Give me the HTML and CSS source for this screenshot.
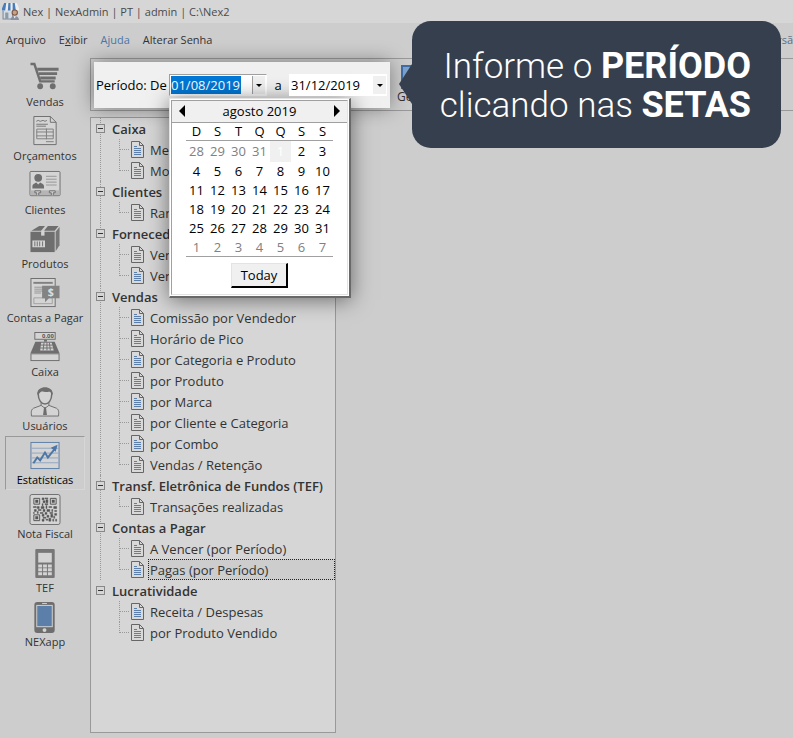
FILE: index.html
```html
<!DOCTYPE html>
<html lang="pt-BR">
<head>
    <meta charset="UTF-8">
    <meta name="viewport" content="width=device-width, initial-scale=1.0">
    <title>Nex | NexAdmin</title>
    <link rel="stylesheet" href="styles.css">
</head>

<body>
    <!-- shared icons -->
    <svg class="defs" width="0" height="0">
        <symbol id="doc" viewBox="0 0 13 17">
            <path d="M.5.5h8l4 4v12H.5z" fill="#d9d9d9" stroke="#666"/>
            <path d="M8.500.5v4h4" fill="none" stroke="#666"/>
            <path d="M3 5.500h3M3 7.500h7M3 9.500h7M3 11.500h7M3 13.500h7" stroke="#5b7fa8"/>
        </symbol>
    </svg>

    <header class="titlebar">
        <svg width="17" height="17" viewBox="0 0 16 16">
            <path d="M1 7v8h9V7" fill="#d5dbe2" stroke="#7d8b99"/>
            <path d="M3 9h3v6H3z" fill="#8d9aa8"/>
            <path d="M2 0h12l2 5v2H0V5z" fill="#eee"/>
            <path d="M2 0h2L3 7H0V5zM6 0h2v7H5.500zM10 0h2l1 7h-3z" fill="#4a7db8"/>
            <circle cx="12" cy="9" r="2.500" fill="#c9a184" stroke="#7b5a48"/>
            <path d="M8 16c0-5 8-5 8 0z" fill="#8791a0"/>
            <path d="M11 12.500l1 2 1-2z" fill="#fff"/>
        </svg>
        <span>Nex | NexAdmin | PT | admin | C:\Nex2</span>
    </header>

    <nav class="menubar">
        <a href="#">Arquivo</a>
        <a href="#">E<u>x</u>ibir</a>
        <a href="#" class="help">Ajuda</a>
        <a href="#">Alterar Senha</a>
        <span class="version">Versã</span>
    </nav>

    <div class="window">
        <nav class="sidebar">
            <a href="#" class="item">
                <svg width="32" height="32" viewBox="0 0 32 32">
                    <path d="M1 2h4l6 18h15" fill="none" stroke="#6e6e6e" stroke-width="2.500"/>
                    <path d="M8 7.500h22M9.500 12h19M11 16.500h16" stroke="#6e6e6e" stroke-width="3"/>
                    <circle cx="11" cy="25" r="3" fill="#6e6e6e"/>
                    <circle cx="24" cy="25" r="3" fill="#6e6e6e"/>
                </svg>
                <span>Vendas</span>
            </a>
            <a href="#" class="item">
                <svg width="32" height="32" viewBox="0 0 32 32">
                    <path d="M4.500.5h17l6 6v23h-23z" fill="#d4d4d4" stroke="#6e6e6e"/>
                    <path d="M21.500.5v6h6" fill="none" stroke="#6e6e6e"/>
                    <path d="M7 5.500l2-1 2 1 3-1 2 1 2-1M7 8.500h12M7 10.500h10" fill="none" stroke="#777"/>
                    <path d="M7.500 13.500h17v10h-17zM7 16.500h18M7 20.500h18M17.500 13v11M17 26.500h8" fill="none" stroke="#808080"/>
                </svg>
                <span>Orçamentos</span>
            </a>
            <a href="#" class="item">
                <svg width="32" height="32" viewBox="0 0 32 32">
                    <rect x=".5" y="1.500" width="31" height="25" rx="1" fill="#d4d4d4" stroke="#6e6e6e"/>
                    <path d="M1 21h30v5H1z" fill="#b5b5b5"/>
                    <circle cx="9" cy="8" r="4" fill="#6e6e6e"/>
                    <path d="M3 19v-2c0-3 3-3 4-4l2 2 2-2c1 1 4 1 4 4v2z" fill="#6e6e6e"/>
                    <path d="M17 6.500h11M17 9.500h11M17 12.500h11M17 15.500h11" stroke="#969696"/>
                    <path d="M7.500 26v-2.500h-2v-2h6v2h-2V26M22.500 26v-2.500h-2v-2h6v2h-2V26" fill="#d4d4d4" stroke="#6e6e6e"/>
                </svg>
                <span>Clientes</span>
            </a>
            <a href="#" class="item">
                <svg width="32" height="32" viewBox="0 0 32 32">
                    <path d="M1 8h25v21H1z" fill="#6e6e6e"/>
                    <path d="M2 7l8-5h6l-4 5zM15 7l4-5h11l-4 5z" fill="#6e6e6e"/>
                    <path d="M27 8l4-5v19l-4 6z" fill="#777"/>
                    <path d="M12 7h3.500v5H12z" fill="#d4d4d4"/>
                    <path d="M3 17h13v7H3z" fill="#d4d4d4"/>
                    <path d="M5.500 18v5M8 18v5M10.500 18v5M13.500 18v5" stroke="#6e6e6e"/>
                </svg>
                <span>Produtos</span>
            </a>
            <a href="#" class="item">
                <svg width="32" height="32" viewBox="0 0 32 32">
                    <rect x="1.500" y=".5" width="25" height="29" fill="#d4d4d4" stroke="#6e6e6e"/>
                    <path d="M4 5h20" stroke="#808080" stroke-width="2"/>
                    <path d="M5 9.500h9M5 11.500h9M5 13.500h9M5 15.500h7" stroke="#969696"/>
                    <path d="M4.500 20.500h19v6h-19z" fill="none" stroke="#a0a0a0"/>
                    <path d="M13 8h18v13H20l-4 4v-4h-3z" fill="#838383"/>
                    <text x="22" y="19" class="coin">$</text>
                </svg>
                <span>Contas a Pagar</span>
            </a>
            <a href="#" class="item">
                <svg width="32" height="32" viewBox="0 0 32 32">
                    <rect x="5.500" y=".5" width="21" height="7" fill="#d4d4d4" stroke="#6e6e6e"/>
                    <text x="19" y="6" class="digits">0.00</text>
                    <path d="M15 8h3v2h-3z" fill="#6e6e6e"/>
                    <path d="M6 10h20l5 12H1z" fill="#6e6e6e"/>
                    <path d="M12 11h11l2 8H11z" fill="#d4d4d4"/>
                    <path d="M15 11l-1 8M18 11v8M20.500 11l1 8M11 13.500h13M11 16.500h13" stroke="#6e6e6e"/>
                    <rect x="1.500" y="22.500" width="29" height="7" fill="#d4d4d4" stroke="#6e6e6e"/>
                </svg>
                <span>Caixa</span>
            </a>
            <a href="#" class="item">
                <svg width="32" height="32" viewBox="0 0 32 32">
                    <path d="M12 16v4L4 23c-3 2-2 5-2 8h28c0-3 1-6-2-8l-8-3v-4" fill="#d4d4d4" stroke="#6e6e6e"/>
                    <path d="M9 8c0-7 14-7 14 0 0 14-14 14-14 0z" fill="#d4d4d4" stroke="#6e6e6e" stroke-width="1.500"/>
                    <path d="M8 8c0-9 16-9 16 0l-1 2c0-4-2-4-3-4-4 1-7-1-8 0s-2 1-3 4z" fill="#6e6e6e"/>
                    <path d="M12 20l4 3 4-3" fill="none" stroke="#6e6e6e"/>
                    <path d="M15 22h2l1 8h-4z" fill="#6e6e6e"/>
                </svg>
                <span>Usuários</span>
            </a>
            <a href="#" class="item active">
                <svg width="32" height="32" viewBox="0 0 32 32">
                    <rect x="1.500" y="2.500" width="29" height="27" fill="#d4d4d4" stroke="#5b7fa8"/>
                    <path d="M2 8.500h28M2 13.500h28M2 18.500h28M2 23.500h28" stroke="#8fa5bf"/>
                    <path d="M4 24l4-6 3 3 5-8 3 5 8-10" fill="none" stroke="#4c76a5" stroke-width="2"/>
                    <path d="M29 5l-7 3 5 4z" fill="#4c76a5"/>
                </svg>
                <span>Estatísticas</span>
            </a>
            <a href="#" class="item">
                <svg width="32" height="32" viewBox="0 0 32 32">
                    <rect x=".5" y=".5" width="31" height="31" rx="2" fill="#d4d4d4" stroke="#6e6e6e"/>
                    <path d="M4.500 4.500h6v6h-6zM21.500 4.500h6v6h-6zM4.500 21.500h6v6h-6z" fill="none" stroke="#555"/>
                    <path d="M6 6h3v3H6zM23 6h3v3h-3zM6 23h3v3H6z" fill="#555"/>
                    <path d="M13 4h2v2h-2zM16 4h3v1h-3zM14 7h2v2h-2zM17 6h2v3h-2zM13 10h1v2h-1zM16 10h3v1h-3zM4 13h3v1H4zM8 13h2v2H8zM12 13h3v2h-3zM17 12h1v3h-1zM20 13h3v1h-3zM25 13h3v2h-3zM5 16h2v2H5zM9 16h3v1H9zM14 16h2v2h-2zM18 16h3v2h-3zM23 16h1v2h-1zM26 17h2v1h-2zM4 19h1v1H4zM8 18h1v2H8zM11 19h3v1h-3zM16 19h2v2h-2zM21 19h3v1h-3zM26 20h2v2h-2zM13 21h2v2h-2zM18 22h2v2h-2zM22 21h2v3h-2zM25 23h1v2h-1zM14 24h3v1h-3zM13 26h2v2h-2zM17 26h2v1h-2zM20 25h2v3h-2zM24 26h1v2h-1zM27 26h1v2h-1z" fill="#555" stroke="#555" stroke-width=".5"/>
                </svg>
                <span>Nota Fiscal</span>
            </a>
            <a href="#" class="item">
                <svg width="32" height="32" viewBox="0 0 32 32">
                    <rect x="6" y="1" width="20" height="30" rx="1" fill="#777"/>
                    <path d="M9 5h14v10H9z" fill="#d4d4d4"/>
                    <path d="M9 17h4v3H9zM14 17h4v3h-4zM19 17h4v3h-4zM9 21h4v3H9zM14 21h4v3h-4zM19 21h4v3h-4zM9 25h4v3H9zM14 25h4v3h-4zM19 25h4v3h-4z" fill="#d4d4d4"/>
                </svg>
                <span>TEF</span>
            </a>
            <a href="#" class="item">
                <svg width="32" height="32" viewBox="0 0 32 32">
                    <rect x="5" y="0" width="21" height="32" rx="3" fill="#6e6e6e"/>
                    <path d="M7 3h17v23H7z" fill="#d4d4d4"/>
                    <path d="M8 4h15v21H8z" fill="#5b7fa8"/>
                    <path d="M13 1.500h5" stroke="#d4d4d4"/>
                    <circle cx="15.500" cy="29" r="2" fill="#d4d4d4"/>
                </svg>
                <span>NEXapp</span>
            </a>
        </nav>

        <main>
            <div class="toolbar">
                <form class="period">
                    <label for="from">Período: De</label>
                    <div class="date focused">
                        <input type="text" id="from" value="01/08/2019">
                        <button type="button" class="drop" aria-label="Abrir calendário"></button>

                        <div class="calendar">
                            <div class="calendar-body">
                                <div class="month">
                                    <button type="button" class="prev" aria-label="Mês anterior"></button>
                                    <span>agosto 2019</span>
                                    <button type="button" class="next" aria-label="Próximo mês"></button>
                                </div>
                                <table>
                                    <thead>
                                        <tr><th>D</th><th>S</th><th>T</th><th>Q</th><th>Q</th><th>S</th><th>S</th></tr>
                                    </thead>
                                    <tbody>
                                        <tr class="first"><td class="out">28</td><td class="out">29</td><td class="out">30</td><td class="out">31</td><td class="selected">1</td><td>2</td><td>3</td></tr>
                                        <tr><td>4</td><td>5</td><td>6</td><td>7</td><td>8</td><td>9</td><td>10</td></tr>
                                        <tr><td>11</td><td>12</td><td>13</td><td>14</td><td>15</td><td>16</td><td>17</td></tr>
                                        <tr><td>18</td><td>19</td><td>20</td><td>21</td><td>22</td><td>23</td><td>24</td></tr>
                                        <tr><td>25</td><td>26</td><td>27</td><td>28</td><td>29</td><td>30</td><td>31</td></tr>
                                        <tr><td class="out">1</td><td class="out">2</td><td class="out">3</td><td class="out">4</td><td class="out">5</td><td class="out">6</td><td class="out">7</td></tr>
                                    </tbody>
                                </table>
                                <button type="button" class="today">Today</button>
                            </div>
                        </div>
                    </div>
                    <label for="to">a</label>
                    <div class="date">
                        <input type="text" id="to" value="31/12/2019">
                        <button type="button" class="drop" aria-label="Abrir calendário"></button>
                    </div>
                </form>
                <button type="button" class="generate">
                    <svg width="24" height="24" viewBox="0 0 24 24">
                        <rect x="1" y="1" width="22" height="22" fill="#7ea3cf" stroke="#3f6fa8" stroke-width="2"/>
                    </svg>
                    <span>Gerar</span>
                </button>
                <div class="callout">Informe o <b>PERÍODO</b><br>clicando nas <b>SETAS</b></div>
            </div>

            <div class="tree">
                <section>
                    <h2><button type="button" class="toggle" aria-label="Recolher"></button>Caixa</h2>
                    <ul>
                        <li><svg class="doc"><use href="#doc"/></svg><a href="#">Meios</a></li>
                        <li><svg class="doc"><use href="#doc"/></svg><a href="#">Mov.</a></li>
                    </ul>
                </section>
                <section>
                    <h2><button type="button" class="toggle" aria-label="Recolher"></button>Clientes</h2>
                    <ul>
                        <li><svg class="doc"><use href="#doc"/></svg><a href="#">Rank</a></li>
                    </ul>
                </section>
                <section>
                    <h2><button type="button" class="toggle" aria-label="Recolher"></button>Fornecedor</h2>
                    <ul>
                        <li><svg class="doc"><use href="#doc"/></svg><a href="#">Vend.</a></li>
                        <li><svg class="doc"><use href="#doc"/></svg><a href="#">Vend.</a></li>
                    </ul>
                </section>
                <section>
                    <h2><button type="button" class="toggle" aria-label="Recolher"></button>Vendas</h2>
                    <ul>
                        <li><svg class="doc"><use href="#doc"/></svg><a href="#">Comissão por Vendedor</a></li>
                        <li><svg class="doc"><use href="#doc"/></svg><a href="#">Horário de Pico</a></li>
                        <li><svg class="doc"><use href="#doc"/></svg><a href="#">por Categoria e Produto</a></li>
                        <li><svg class="doc"><use href="#doc"/></svg><a href="#">por Produto</a></li>
                        <li><svg class="doc"><use href="#doc"/></svg><a href="#">por Marca</a></li>
                        <li><svg class="doc"><use href="#doc"/></svg><a href="#">por Cliente e Categoria</a></li>
                        <li><svg class="doc"><use href="#doc"/></svg><a href="#">por Combo</a></li>
                        <li><svg class="doc"><use href="#doc"/></svg><a href="#">Vendas / Retenção</a></li>
                    </ul>
                </section>
                <section>
                    <h2><button type="button" class="toggle" aria-label="Recolher"></button>Transf. Eletrônica de Fundos (TEF)</h2>
                    <ul>
                        <li><svg class="doc"><use href="#doc"/></svg><a href="#">Transações realizadas</a></li>
                    </ul>
                </section>
                <section>
                    <h2><button type="button" class="toggle" aria-label="Recolher"></button>Contas a Pagar</h2>
                    <ul>
                        <li><svg class="doc"><use href="#doc"/></svg><a href="#">A Vencer (por Período)</a></li>
                        <li><svg class="doc"><use href="#doc"/></svg><a href="#" class="current">Pagas (por Período)</a></li>
                    </ul>
                </section>
                <section>
                    <h2><button type="button" class="toggle" aria-label="Recolher"></button>Lucratividade</h2>
                    <ul>
                        <li><svg class="doc"><use href="#doc"/></svg><a href="#">Receita / Despesas</a></li>
                        <li><svg class="doc"><use href="#doc"/></svg><a href="#">por Produto Vendido</a></li>
                    </ul>
                </section>
            </div>
        </main>
    </div>
</body>
</html>
```
FILE: styles.css
```css
*, *::before {
    box-sizing: border-box;
}

body {
    margin: 0;
    min-height: 100vh;
    display: flex;
    flex-direction: column;
    background-color: #cdcdcd;
    color: #333;
    font-family: "Open Sans", "Noto Sans", sans-serif;
    font-size: 11px;
    overflow-x: hidden;
}

a {
    color: inherit;
    text-decoration: none;
}

button, input {
    font: inherit;
    color: inherit;
    margin: 0;
    padding: 0;
    border: none;
    background: none;
}

.defs {
    position: absolute;
}

.titlebar {
    display: flex;
    align-items: center;
    gap: 4px;
    height: 23px;
    padding-left: 2px;
    background-color: #d6d6d6;
    color: #4a4a4a;
}

.menubar {
    display: flex;
    align-items: center;
    gap: 13px;
    height: 35px;
    padding: 0 0 2px 6px;
}

.help {
    color: #4c76a5;
}

.version {
    margin-left: auto;
    color: #5b6f88;
}

.window {
    flex: 1;
    display: flex;
}

/* sidebar */
.sidebar {
    width: 90px;
    flex-shrink: 0;
    padding: 0 5px;
}

.item {
    display: flex;
    flex-direction: column;
    align-items: center;
    height: 54px;
    padding-top: 3px;
    border: 1px solid transparent;
    line-height: 18px;
    white-space: nowrap;
}

.item.active {
    border-color: #999 #d6d6d6 #d6d6d6 #999;
    color: #000;
}

.coin, .digits {
    fill: #ddd;
    font-weight: bold;
    font-size: 11px;
    text-anchor: middle;
}

.digits {
    fill: #555;
    font-size: 6px;
}

main {
    flex: 1;
    min-width: 0;
    display: flex;
    flex-direction: column;
    gap: 6px;
    padding-bottom: 5px;
}

/* toolbar */
.toolbar {
    position: relative;
    display: flex;
    align-items: center;
    gap: 7px;
    height: 53px;
    padding-left: 3px;
    border: 1px solid #999;
    border-right: none;
}

.period {
    position: relative;
    z-index: 2;
    display: flex;
    align-items: center;
    height: 46px;
    width: 296px;
    padding-left: 2px;
    background-color: #f0f0f0;
    color: #000;
    font-size: 13px;
    white-space: nowrap;
    box-shadow: 0 0 20px rgba(0, 0, 0, 0.4);
}

.period label[for="from"] {
    width: 73px;
}

.period label[for="to"] {
    width: 22px;
    text-align: center;
}

.date {
    position: relative;
    display: flex;
    align-items: center;
    flex-shrink: 0;
    height: 22px;
    width: 98px;
    padding: 0 1px 0 2px;
    background-color: #fff;
}

.date.focused {
    padding-left: 1px;
    border: 1px solid #a0a0a0;
    border-right-color: #fff;
    border-bottom-color: #fff;
}

.date input {
    width: 70px;
    height: 18px;
}

.focused input {
    background-color: #0078d7;
    color: #fff;
}

.drop {
    width: 13px;
    height: 18px;
    margin-left: auto;
    background-color: #f0f0f0;
}

.focused .drop {
    border-left: 1px solid #a0a0a0;
}

.drop::before {
    content: "";
    display: block;
    margin: 2px auto 0;
    width: 6px;
    border: 3px solid transparent;
    border-top-color: #000;
    border-bottom: none;
}

.generate {
    display: flex;
    flex-direction: column;
    align-items: center;
    line-height: 16px;
    font-size: 12px;
}

/* calendar */
.calendar {
    position: absolute;
    top: 23px;
    left: -1px;
    width: 182px;
    border: 1px solid #e3e3e3;
    border-right: 2px solid #696969;
    border-bottom: 2px solid #696969;
    background-color: #fff;
    box-shadow: 0 2px 20px rgba(0, 0, 0, 0.5);
}

.calendar-body {
    margin: 1px;
    padding-bottom: 6px;
    border: 1px solid #a0a0a0;
    border-right-color: #e3e3e3;
    border-bottom-color: #e3e3e3;
}

.month {
    display: flex;
    align-items: center;
    justify-content: space-between;
    height: 22px;
    padding: 0 7px;
    background-color: #f0f0f0;
    border-bottom: 1px solid #a0a0a0;
}

.prev, .next {
    border: 6px solid transparent;
}

.prev {
    border-right-color: #000;
    border-left: none;
}

.next {
    border-left-color: #000;
    border-right: none;
}

.calendar table {
    table-layout: fixed;
    width: 147px;
    margin: 0 auto;
    border-collapse: collapse;
    border-bottom: 1px solid #a0a0a0;
    text-align: center;
}

.calendar th {
    height: 18px;
    padding: 0;
    border-bottom: 1px solid #a0a0a0;
    font-weight: normal;
    line-height: 16px;
}

.calendar td {
    height: 19px;
    padding: 0;
    line-height: 18px;
}

.calendar .first td {
    height: 21px;
    border-top: 2px solid #fff;
}

.calendar .first td {
    border-top-color: #a0a0a0;
    border-top-width: 1px;
}

.out {
    color: #808080;
}

.selected {
    background-color: #f0f0f0;
    color: #fff;
}

.today {
    display: block;
    width: 57px;
    height: 25px;
    margin: 6px auto 0;
    background-color: #f0f0f0;
    border: 1px solid #e3e3e3;
    border-right: 2px solid #000;
    border-bottom: 2px solid #000;
}

/* callout */
.callout {
    position: absolute;
    z-index: 3;
    top: -38px;
    right: 12px;
    width: 369px;
    padding: 26px 30px 23px 0;
    border-radius: 19px;
    background-color: #363f4d;
    color: #fff;
    font-family: Roboto, sans-serif;
    font-size: 35px;
    font-weight: 300;
    line-height: 39px;
    text-align: right;
    white-space: nowrap;
}

.callout b {
    font-size: 36px;
    font-weight: 700;
}

.callout::before {
    content: "";
    position: absolute;
    top: 43px;
    left: -13px;
    border: 20px solid transparent;
    border-left: none;
    border-right: 13px solid #363f4d;
}

/* report tree */
.tree {
    flex: 1;
    width: 246px;
    padding-left: 5px;
    border: 1px solid #999;
    background-color: #d6d6d6;
    font-size: 13px;
}

.tree section {
    padding-left: 4px;
    border-left: 1px dotted #999;
    margin-left: 4px;
}

.tree section:last-child {
    border-left-color: transparent;
}

.tree h2 {
    display: flex;
    align-items: center;
    gap: 7px;
    height: 21px;
    margin: 0 0 0 -9px;
    font-size: 13px;
    font-weight: 600;
    white-space: nowrap;
}

.toggle {
    width: 9px;
    height: 9px;
    border: 1px solid #888;
    background-color: #d6d6d6;
}

.toggle::before {
    content: "";
    display: block;
    height: 1px;
    margin: 0 1px;
    background-color: #333;
}

.tree ul {
    list-style: none;
    margin: 0;
    padding: 0 0 0 14px;
}

.tree li {
    display: flex;
    align-items: center;
    height: 21px;
    border-left: 1px dotted #999;
}

.tree li:last-child {
    border-left-color: transparent;
}

.tree li::before {
    content: "";
    width: 9px;
    margin-right: 2px;
    border-top: 1px dotted #999;
}

.tree li:last-child::before {
    align-self: flex-start;
    width: 10px;
    height: 11px;
    margin-left: -1px;
    border-top: none;
    border-left: 1px dotted #999;
    border-bottom: 1px dotted #999;
}

.doc {
    width: 13px;
    height: 17px;
    margin-right: 4px;
    flex-shrink: 0;
}

.tree li a {
    flex: 1;
    height: 21px;
    padding-left: 1px;
    border: 1px solid transparent;
    line-height: 20px;
    white-space: nowrap;
}

.tree li .current {
    border: 1px dotted #222;
    background-color: #cdcdcd;
}
```
